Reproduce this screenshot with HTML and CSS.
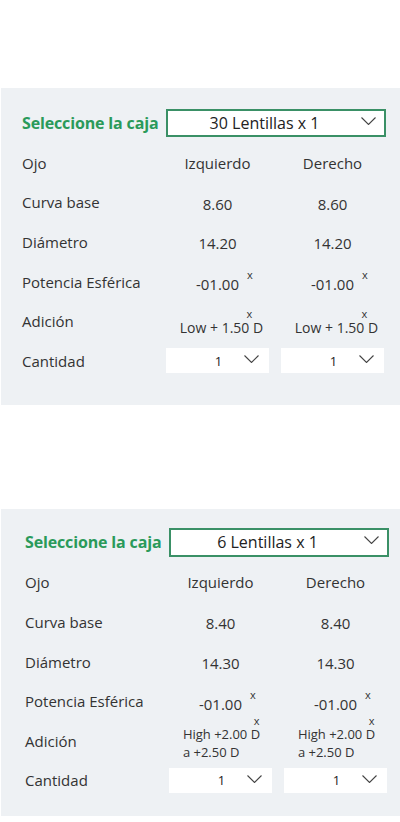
FILE: index.html
```html
<!DOCTYPE html>
<html lang="es">
<head>
<meta charset="utf-8">
<title>Lentillas</title>
<link rel="stylesheet" href="styles.css">
</head>
<body>
<div class="page">
  <section class="panel p1">
    <div class="head">
      <span class="title">Seleccione la caja</span>
      <div class="box-select"><span class="val">30 Lentillas x 1</span><svg class="chev" width="15" height="8" viewBox="0 0 15 8"><path d="M0.5 0.5 L7.5 7.5 L14.5 0.5" fill="none" stroke="#444" stroke-width="1.1"/></svg></div>
    </div>
    <div class="row"><span class="lbl">Ojo</span><span class="cell">Izquierdo</span><span class="cell">Derecho</span></div>
    <div class="row"><span class="lbl">Curva base</span><span class="cell num">8.60</span><span class="cell num">8.60</span></div>
    <div class="row"><span class="lbl">Diámetro</span><span class="cell num">14.20</span><span class="cell num">14.20</span></div>
    <div class="row"><span class="lbl">Potencia Esférica</span><span class="cell num pot">-01.00<span class="xmark">x</span></span><span class="cell num pot">-01.00<span class="xmark">x</span></span></div>
    <div class="row"><span class="lbl">Adición</span><span class="cell add">Low + 1.50<span class="xmark xin">x</span> D</span><span class="cell add">Low + 1.50<span class="xmark xin">x</span> D</span></div>
    <div class="row"><span class="lbl">Cantidad</span>
      <div class="qty"><span class="qval">1</span><svg class="chev" width="15" height="8" viewBox="0 0 15 8"><path d="M0.5 0.5 L7.5 7.5 L14.5 0.5" fill="none" stroke="#444" stroke-width="1.1"/></svg></div>
      <div class="qty"><span class="qval">1</span><svg class="chev" width="15" height="8" viewBox="0 0 15 8"><path d="M0.5 0.5 L7.5 7.5 L14.5 0.5" fill="none" stroke="#444" stroke-width="1.1"/></svg></div>
    </div>
  </section>

  <section class="panel p2">
    <div class="head">
      <span class="title">Seleccione la caja</span>
      <div class="box-select"><span class="val">6 Lentillas x 1</span><svg class="chev" width="15" height="8" viewBox="0 0 15 8"><path d="M0.5 0.5 L7.5 7.5 L14.5 0.5" fill="none" stroke="#444" stroke-width="1.1"/></svg></div>
    </div>
    <div class="row"><span class="lbl">Ojo</span><span class="cell">Izquierdo</span><span class="cell">Derecho</span></div>
    <div class="row"><span class="lbl">Curva base</span><span class="cell num">8.40</span><span class="cell num">8.40</span></div>
    <div class="row"><span class="lbl">Diámetro</span><span class="cell num">14.30</span><span class="cell num">14.30</span></div>
    <div class="row"><span class="lbl">Potencia Esférica</span><span class="cell num pot">-01.00<span class="xmark">x</span></span><span class="cell num pot">-01.00<span class="xmark">x</span></span></div>
    <div class="row"><span class="lbl">Adición</span><span class="cell add2"><span class="addblk">High +2.00 <span class="xmark xin2">x</span>D<br>a +2.50 D</span></span><span class="cell add2"><span class="addblk">High +2.00 <span class="xmark xin2">x</span>D<br>a +2.50 D</span></span></div>
    <div class="row"><span class="lbl">Cantidad</span>
      <div class="qty"><span class="qval">1</span><svg class="chev" width="15" height="8" viewBox="0 0 15 8"><path d="M0.5 0.5 L7.5 7.5 L14.5 0.5" fill="none" stroke="#444" stroke-width="1.1"/></svg></div>
      <div class="qty"><span class="qval">1</span><svg class="chev" width="15" height="8" viewBox="0 0 15 8"><path d="M0.5 0.5 L7.5 7.5 L14.5 0.5" fill="none" stroke="#444" stroke-width="1.1"/></svg></div>
    </div>
  </section>
</div>
</body>
</html>
```

FILE: styles.css
```css
html, body {
  margin: 0;
  padding: 0;
  background: #ffffff;
}
body {
  font-family: "Open Sans", "Noto Sans", sans-serif;
  color: #333333;
}
.page {
  padding-top: 88px;
  padding-left: 1px;
  display: flex;
  flex-direction: column;
  gap: 104px;
}
.panel {
  background: #eef1f4;
  display: flex;
  flex-direction: column;
  padding-left: 21px;
}
.p1 {
  padding-top: 21px;
  padding-bottom: 24px;
}
.p2 {
  padding-top: 19px;
  padding-left: 24px;
  padding-bottom: 16px;
}
.head {
  display: grid;
  grid-template-columns: 144px 220px;
  align-items: center;
  margin-bottom: 6px;
}
.title {
  color: #2a9a5a;
  font-weight: 700;
  font-size: 16px;
  letter-spacing: -0.15px;
  white-space: nowrap;
}
.box-select {
  height: 28px;
  box-sizing: border-box;
  border: 2px solid #3a9066;
  background: #ffffff;
  display: flex;
  align-items: center;
}
.p2 .box-select {
  height: 29px;
}
.box-select .val {
  flex: 1;
  text-align: center;
  font-size: 16px;
  color: #222222;
}
.box-select .chev {
  margin-right: 8px;
  margin-top: -4px;
}
.row {
  display: grid;
  grid-template-columns: 132px 103px 103px;
  column-gap: 12px;
  align-items: center;
  height: 39.6px;
}
.lbl {
  font-size: 15px;
  color: #333333;
  white-space: nowrap;
}
.cell {
  text-align: center;
  font-size: 15px;
  color: #333333;
  white-space: nowrap;
}
.num {
  padding-top: 3px;
}
.pot {
  padding-top: 5px;
}
.xmark {
  display: inline-block;
  width: 0;
  font-size: 11px;
  line-height: 0;
  vertical-align: 11px;
  overflow: visible;
  text-indent: 8px;
}
.xin {
  text-indent: -3px;
  vertical-align: 15px;
}
.xin2 {
  text-indent: 3px;
  vertical-align: 14px;
}
.add {
  font-size: 14px;
  padding-top: 9px;
  padding-left: 8px;
}
.add2 {
  font-size: 13px;
  line-height: 18px;
  padding-left: 2px;
}
.addblk {
  display: inline-block;
  text-align: left;
}
.qty {
  height: 25px;
  background: #ffffff;
  display: flex;
  align-items: center;
}
.qval {
  flex: 1;
  text-align: center;
  padding-left: 27px;
  font-size: 13px;
  color: #222222;
}
.qty .chev {
  margin-right: 10px;
  margin-top: -3px;
}
```
